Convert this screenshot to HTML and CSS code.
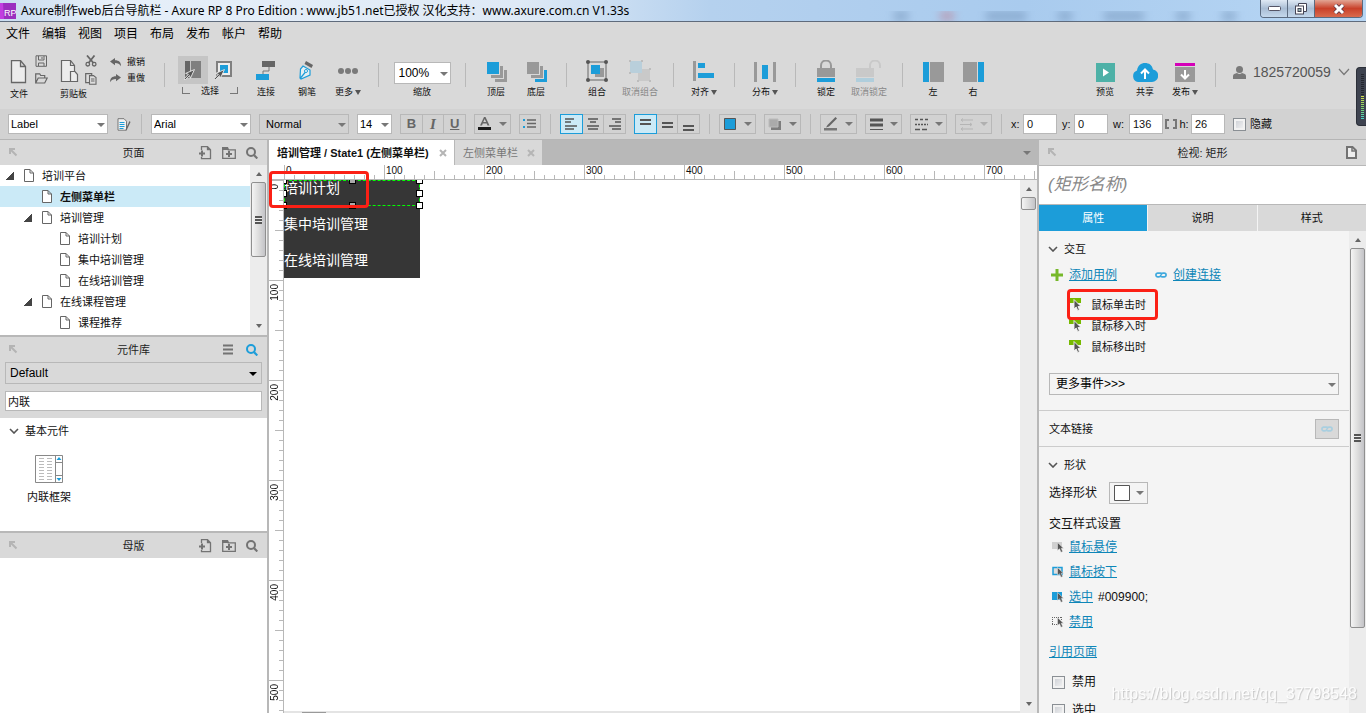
FILE: index.html
```html
<!DOCTYPE html>
<html lang="zh-CN">
<head>
<meta charset="utf-8">
<title>Axure RP 8</title>
<link rel="stylesheet" href="styles.css">
</head>
<body>
<svg class="sprite" aria-hidden="true">
  <symbol id="i-page" viewBox="0 0 10 13"><path d="M.5.5h5.5l3.500 3.500v8.500h-9zM6 .5v3.500h3.500" fill="#fff" stroke="#666"/></symbol>
  <symbol id="i-pin" viewBox="0 0 9 9"><path d="M1 6V1h5M1.500 1.500l6 6" fill="none" stroke="#b4b4b4" stroke-width="2"/></symbol>
  <symbol id="i-addpage" viewBox="0 0 14 14"><path d="M3.500 4V.7h6l3 3v9h-9V11M9.500.7v3h3" fill="none" stroke="#737373" stroke-width="1.300"/><path d="M1 7.500h6M4 4.500v6" stroke="#737373" stroke-width="2"/></symbol>
  <symbol id="i-addfolder" viewBox="0 0 14 12"><path d="M.7 11.300V.8h4.500l1 2h7.100v8.500z" fill="none" stroke="#737373" stroke-width="1.300"/><path d="M0 0h6l1 3H0zM6 4h2v2h2v2H8v2H6V8H4V6h2z" fill="#737373"/></symbol>
  <symbol id="i-search" viewBox="0 0 12 12"><path d="M8.200 8.200L11.300 11.500" stroke="currentColor" stroke-width="2.200"/><circle cx="5" cy="5" r="4" fill="none" stroke="currentColor" stroke-width="2"/></symbol>
  <symbol id="i-chev" viewBox="0 0 10 6"><path d="M1 1l4 4 4-4" fill="none" stroke="#555" stroke-width="1.600"/></symbol>
  <symbol id="i-link" viewBox="0 0 13 6"><path d="M8 1.500C6.500.5 5.500 1 4 1H3a2 2 0 0 0 0 4h1.500C6.500 5 6.500 1 8.500 1H10a2 2 0 0 1 0 4H8C7 5 6.500 4.800 6 4.500" fill="none" stroke="currentColor" stroke-width="1.800"/></symbol>
  <symbol id="i-cursor" viewBox="0 0 7 11"><path d="M.5.5v8l2-1.700 1.500 3.500 1.700-.8-1.500-3.300h2.300z" fill="#555" stroke="#eee" stroke-width=".5"/></symbol>
  <symbol id="i-event" viewBox="0 0 13 13"><path d="M0 0h12v5H0z" fill="#76b900"/><path d="M5 1.500v9.500l2.200-2 1.500 3.500 1.800-.8L9 8.500h3z" fill="#555" stroke="#f4f4f4" stroke-width=".9"/></symbol>
  <symbol id="i-arrow" viewBox="0 0 10 10"><path d="M0 9l1 1 4-4 .8 2.500L9.500.5 1.500 4l2.500.8z" fill="#555" stroke="#eee" stroke-width=".8"/></symbol>
</svg>

<header class="titlebar">
  <svg class="logo" width="16" height="16"><path d="M0 0h16v16H0z" fill="#9b2fbf"/><path d="M0 0h3l1 16H0z" fill="#c23ee0"/><text x="4" y="13" class="logo-text">RP</text></svg>
  <h1 class="title">Axure制作web后台导航栏 - Axure RP 8 Pro Edition : www.jb51.net已授权 汉化支持：www.axure.com.cn V1.33s</h1>
  <div class="smudges"><i></i><i class="red"></i><i class="wide"></i><i></i><i class="wide"></i><i></i><i></i></div>
  <div class="winctl">
    <button aria-label="最小化"><svg width="13" height="6"><rect x=".5" y=".5" width="12" height="4" rx="1" fill="#fff" stroke="#556"/></svg></button>
    <button aria-label="还原"><svg width="12" height="12"><path d="M3.500 3V.5h8v8H9" fill="#fff" stroke="#445"/><rect x=".5" y="3" width="8" height="8" fill="#fff" stroke="#445"/><rect x="3" y="5.500" width="3" height="3" fill="#9bb" stroke="#445"/></svg></button>
    <button class="close" aria-label="关闭"><svg width="12" height="10"><path d="M2 1l8 8M10 1L2 9" stroke="#534" stroke-width="4.500"/><path d="M2 1l8 8M10 1L2 9" stroke="#fff" stroke-width="3"/></svg></button>
  </div>
</header>

<nav class="menubar">
  <button>文件</button><button>编辑</button><button>视图</button><button>项目</button><button>布局</button><button>发布</button><button>帐户</button><button>帮助</button>
</nav>

<div class="toolbar">
  <div class="filetools">
    <button class="tool file"><svg width="18" height="24"><path d="M1.500.5h9l5 6v16h-14zM10.500.5v6h5" fill="#ececec" stroke="#666" stroke-width="1.300"/></svg><span>文件</span></button>
    <div class="pair">
      <button aria-label="保存"><svg width="13" height="12"><path d="M1 .8h10.500v10.500H1z" fill="none" stroke="#666"/><path d="M3.500 1v4h5.500V1M3.500 11V8h5.500v3M7 2v2" fill="none" stroke="#666"/></svg></button>
      <button aria-label="打开"><svg width="13" height="11"><path d="M.7 10V.8h4l1 1.700h4v2.500M.7 10l2.500-5h9l-2.500 5z" fill="none" stroke="#666" stroke-width="1.200"/></svg></button>
    </div>
    <button class="tool clip"><svg width="19" height="24"><path d="M10.500 21.500h-9V.5h9l4 5v6M10.500.5v5h4" fill="#ececec" stroke="#666" stroke-width="1.200"/><path d="M10.500 11.500h4.500l2.500 3v7h-7z" fill="#ececec" stroke="#666" stroke-width="1.200"/></svg><span>剪贴板</span></button>
    <div class="pair">
      <button aria-label="剪切"><svg width="12" height="12"><path d="M2 .5l6.500 7.500M9.500.5L3.500 8" stroke="#666" stroke-width="1.800"/><circle cx="2.800" cy="9.200" r="1.800" fill="none" stroke="#666" stroke-width="1.300"/><circle cx="9.200" cy="9.200" r="1.800" fill="none" stroke="#666" stroke-width="1.300"/></svg></button>
      <button aria-label="复制"><svg width="12" height="12"><path d="M.7.6h6v9h-6z" fill="#ddd" stroke="#666" stroke-width="1.200"/><path d="M4.500 2.600h4l2.500 2v6.700H4.500zM6 6h3.500M6 8h3.500" fill="#ddd" stroke="#666" stroke-width="1.100"/></svg></button>
    </div>
    <div class="history">
      <button><svg width="12" height="9"><path d="M0 3.500L5 0v2.300c4 0 6 2 6 6C9.500 6 8 5 5 5v2.300z" fill="#666"/></svg>撤销</button>
      <button><svg width="12" height="9"><path d="M11 3.500L6 0v2.300c-4 0-6 2-6 6C1.500 6 3 5 6 5v2.300z" fill="#666"/></svg>重做</button>
    </div>
  </div>
  <i class="sep"></i>
  <div class="selectgroup">
    <div class="modes">
      <button class="on" aria-label="相交选择"><svg width="18" height="20"><path d="M1 1h5v17H1z" fill="#666"/><path d="M7 1h10v17H7z" fill="#7f7f7f"/><svg x="0" y="9" width="11" height="11" viewBox="0 0 10 10"><use href="#i-arrow"/></svg></svg></button>
      <button aria-label="包含选择"><svg width="19" height="20"><path d="M3 2h14v14H3z" fill="#eee" stroke="#808080" stroke-width="2"/><path d="M6 5h8v8H6z" fill="#1c9dd9"/><svg x="0" y="9" width="11" height="11" viewBox="0 0 10 10"><use href="#i-arrow"/></svg></svg></button>
    </div>
    <div class="bracket"><i></i><span>选择</span><i class="r"></i></div>
  </div>
  <div class="tools spaced">
    <button class="tool"><svg width="20" height="22"><path d="M6 1h13v6H6z" fill="#666"/><path d="M13 7v4H7v4" fill="none" stroke="#777"/><path d="M0 14h13v6H0z" fill="#1c9dd9"/></svg><span>连接</span></button>
    <button class="tool"><svg width="16" height="22"><path d="M7 1l7 4-1.500 3-7-4z" fill="#666"/><path d="M4 6l7 4v5l-9 4-1-1L1.500 9zM1.500 18l5-6" fill="#e5eef2" stroke="#1c9dd9" stroke-width="1.200"/><circle cx="7" cy="11" r="1.500" fill="#fff" stroke="#1c9dd9"/></svg><span>钢笔</span></button>
    <button class="tool"><svg width="22" height="22"><g fill="#7a7a7a"><circle cx="4" cy="11" r="3"/><circle cx="11" cy="11" r="3"/><circle cx="18" cy="11" r="3"/></g></svg><span>更多<b class="dn"></b></span></button>
  </div>
  <i class="sep"></i>
  <div class="zoom"><label for="zoom">缩放</label><div class="combo roomy"><select id="zoom"><option>100%</option></select></div></div>
  <i class="sep"></i>
  <div class="tools">
    <button class="tool"><svg width="21" height="22"><path d="M18 10h3v12H9v-3h9zM14 6h3v12H5v-3h9z" fill="#999"/><path d="M0 2h14v13H0z" fill="#d9d9d9"/><path d="M1 2h12v12H1z" fill="#1c9dd9"/></svg><span>顶层</span></button>
    <button class="tool"><svg width="21" height="22"><path d="M18 10h3v12H9v-3h9z" fill="#1c9dd9"/><path d="M14 6h3v12H5v-3h9z" fill="#999"/><path d="M0 2h14v13H0z" fill="#d9d9d9"/><path d="M1 2h12v12H1z" fill="#999"/></svg><span>底层</span></button>
  </div>
  <i class="sep"></i>
  <div class="tools">
    <button class="tool"><svg width="22" height="22"><path d="M2 2h18v18H2z" fill="none" stroke="#666"/><path d="M9 8h9v9H9z" fill="#999"/><path d="M5 5h9v9H5z" fill="#1c9dd9"/><g fill="#555"><circle cx="2" cy="2" r="2"/><circle cx="20" cy="2" r="2"/><circle cx="2" cy="20" r="2"/><circle cx="20" cy="20" r="2"/></g></svg><span>组合</span></button>
    <button class="tool big" disabled><svg width="22" height="22"><path d="M9 9h12v12H9z" fill="#c9c9c9"/><path d="M1 1h12v12H1z" fill="#b9cfdb"/><g fill="#bdbdbd"><path d="M0 0h2v2H0zM12 0h2v2h-2zM0 12h2v2H0zM20 8h2v2h-2zM8 20h2v2H8zM20 20h2v2h-2z"/></g></svg><span>取消组合</span></button>
  </div>
  <i class="sep"></i>
  <button class="tool"><svg width="22" height="22"><path d="M0 1h3v20H0z" fill="#999"/><path d="M5 3h7v5H5zM5 13h16v5H5z" fill="#1c9dd9"/></svg><span>对齐<b class="dn"></b></span></button>
  <i class="sep"></i>
  <button class="tool"><svg width="22" height="22"><path d="M0 2h3v20H0zM19 2h3v20h-3z" fill="#999"/><path d="M8 5h6v14H8z" fill="#1c9dd9"/></svg><span>分布<b class="dn"></b></span></button>
  <i class="sep"></i>
  <div class="tools">
    <button class="tool"><svg width="18" height="22"><path d="M4 9V5.500a5 5 0 0 1 10 0V9" fill="none" stroke="#999" stroke-width="2"/><path d="M0 8h18v9H0z" fill="#999"/><path d="M0 18h18v4H0z" fill="#1c9dd9"/></svg><span>锁定</span></button>
    <button class="tool big" disabled><svg width="26" height="22"><path d="M14 9V5.500a5 5 0 0 1 10 0V8" fill="none" stroke="#c9c9c9" stroke-width="2"/><path d="M0 8h18v9H0z" fill="#c9c9c9"/><path d="M0 18h18v4H0z" fill="#b0cedc"/></svg><span>取消锁定</span></button>
  </div>
  <i class="sep"></i>
  <div class="tools">
    <button class="tool"><svg width="21" height="22"><path d="M0 2h6v20H0z" fill="#1c9dd9"/><path d="M7 2h14v20H7z" fill="#999"/></svg><span>左</span></button>
    <button class="tool"><svg width="21" height="22"><path d="M15 2h6v20h-6z" fill="#1c9dd9"/><path d="M0 2h14v20H0z" fill="#999"/></svg><span>右</span></button>
  </div>
  <div class="tools last">
    <button class="tool"><svg width="19" height="22"><path d="M0 3h19v19H0z" fill="#4eb1a7"/><path d="M7 8.500l6 4-6 4z" fill="#fff"/></svg><span>预览</span></button>
    <button class="tool"><svg width="26" height="22"><path d="M6 22a6 6 0 0 1-1-11.500C6 5 9 3 13 3c4 0 7 2 8 6.500A6.300 6.300 0 0 1 20 22z" fill="#1c9dd9"/><path d="M13 19v-9M9 13.500l4-4 4 4" fill="none" stroke="#fff" stroke-width="2"/></svg><span>共享</span></button>
    <button class="tool"><svg width="20" height="22"><path d="M0 3h20v3H0z" fill="#d400b8"/><path d="M0 7h20v15H0z" fill="#999"/><path d="M10 10v8M6 14.500l4 4 4-4" fill="none" stroke="#fff" stroke-width="2"/></svg><span>发布<b class="dn"></b></span></button>
  </div>
  <i class="sep"></i>
  <button class="user"><svg width="13" height="13"><circle cx="6.500" cy="3.500" r="3.500" fill="#7a7a7a"/><path d="M0 13v-3c0-2 2-2.500 4-3 1.500 1.300 3.500 1.300 5 0 2 .5 4 1 4 3v3z" fill="#7a7a7a"/></svg><span>1825720059</span><svg width="12" height="8"><path d="M1 1l5 5.500L11 1" fill="none" stroke="#777" stroke-width="1.200"/></svg></button>
  <div class="meter"><i></i></div>
</div>

<div class="formatbar">
  <div class="combo w100"><select aria-label="样式"><option>Label</option></select></div>
  <button class="plain" aria-label="编辑样式"><svg width="14" height="13"><path d="M1 .7h6l2.500 2.500v9H1z" fill="#f2f2f2" stroke="#777"/><path d="M2.500 4.500h5M2.500 6.500h5M2.500 8.500h5M2.500 10.500h4" stroke="#1c9dd9"/><path d="M12.500 3L9 10.500l-.5 2 1.500-1L13.500 4z" fill="#666"/></svg></button>
  <i class="sep"></i>
  <div class="combo w100"><select aria-label="字体"><option>Arial</option></select></div>
  <div class="combo w90 grey"><select aria-label="字形"><option>Normal</option></select></div>
  <div class="combo w35"><select aria-label="字号"><option>14</option></select></div>
  <div class="seg"><button><b>B</b></button><button><em>I</em></button><button><u>U</u></button></div>
  <button class="drop" aria-label="文字颜色"><svg width="14" height="14"><path d="M2 8.500L6 0h1.500l4 8.500H9.500L8.700 6.500H4.800L4 8.500zM5.300 5h2.800L6.700 2z" fill="#666"/><path d="M0 10h13v3H0z" fill="#1a1a1a"/></svg></button>
  <button class="box" aria-label="项目符号"><svg width="14" height="12"><path d="M0 1h2v2H0zM0 8h2v2H0z" fill="#1c9dd9"/><path d="M4 2h9M4 5.500h9M4 9h9" stroke="#666" stroke-width="1.500"/></svg></button>
  <i class="sep"></i>
  <div class="seg">
    <button class="on" aria-label="左对齐"><svg width="12" height="12"><path d="M0 1h9M0 4h6M0 8h12M0 11h9" stroke="#555" stroke-width="1.500"/></svg></button>
    <button aria-label="居中"><svg width="12" height="12"><path d="M1 1h10M3 4h6M0 8h12M1 11h10" stroke="#555" stroke-width="1.500"/></svg></button>
    <button aria-label="右对齐"><svg width="12" height="12"><path d="M3 1h9M6 4h6M0 8h12M3 11h9" stroke="#555" stroke-width="1.500"/></svg></button>
  </div>
  <div class="seg">
    <button class="on" aria-label="顶部"><svg width="11" height="13"><path d="M0 2h11M0 6h11" stroke="#555" stroke-width="2"/></svg></button>
    <button aria-label="中部"><svg width="11" height="13"><path d="M0 5h11M0 9h11" stroke="#555" stroke-width="2"/></svg></button>
    <button aria-label="底部"><svg width="11" height="13"><path d="M0 8h11M0 12h11" stroke="#555" stroke-width="2"/></svg></button>
  </div>
  <i class="sep"></i>
  <button class="drop" aria-label="填充"><svg width="14" height="12"><path d="M1.500.5h11v11h-11z" fill="#1c9dd9" stroke="#555"/></svg></button>
  <button class="drop" aria-label="阴影"><svg width="14" height="13"><path d="M3 3h10v9H3z" fill="#7d7d7d"/><path d="M1 1h9v8H1z" fill="#aaa" stroke="#bbb"/></svg></button>
  <i class="sep"></i>
  <button class="drop" aria-label="线条颜色"><svg width="14" height="14"><path d="M11.500 0l1.500 1.500L5 9.500 2 10.500 3.500 8z" fill="#666"/><path d="M0 11h13v2.500H0z" fill="#777"/></svg></button>
  <button class="drop" aria-label="线宽"><svg width="13" height="13"><path d="M0 2h13" stroke="#555" stroke-width="3"/><path d="M0 7h13" stroke="#555" stroke-width="3"/><path d="M0 11.500h13" stroke="#555"/></svg></button>
  <button class="drop" aria-label="线型"><svg width="13" height="13"><path d="M0 1.500h13" stroke="#555" stroke-width="1.500" stroke-dasharray="3 2"/><path d="M0 6.500h13" stroke="#555" stroke-width="1.500" stroke-dasharray="2 1"/><path d="M0 11.500h13" stroke="#555" stroke-width="1.500" stroke-dasharray="5 2"/></svg></button>
  <button class="drop off" disabled aria-label="箭头"><svg width="13" height="13"><path d="M2 2h11M0 6.500h11M2 11h11M3 .5L1 2l2 1.500M10 5l2 1.500L10 8M3 9.500L1 11l2 1.500" fill="none" stroke="#b5b5b5"/></svg></button>
  <i class="sep"></i>
  <div class="coord x"><label for="cx">x:</label><input id="cx" value="0"></div>
  <div class="coord y"><label for="cy">y:</label><input id="cy" value="0"></div>
  <div class="coord w"><label for="cw">w:</label><input id="cw" value="136"></div>
  <div class="coord h"><svg width="12" height="10"><path d="M4 1H1v8h3M8 1h3v8H8" fill="none" stroke="#777" stroke-width="2"/></svg><label for="ch">h:</label><input id="ch" value="26"></div>
  <label class="check"><input type="checkbox">隐藏</label>
</div>

<main class="work">
  <aside class="left">
    <section class="pages">
      <header class="phead"><svg width="9" height="9"><use href="#i-pin"/></svg><h2>页面</h2><div class="acts"><button aria-label="添加页面"><svg width="14" height="14"><use href="#i-addpage"/></svg></button><button aria-label="添加文件夹"><svg width="14" height="12"><use href="#i-addfolder"/></svg></button><button aria-label="搜索"><svg width="12" height="12"><use href="#i-search"/></svg></button></div></header>
      <div class="scrollrow">
        <ul class="tree">
          <li><i class="tw"></i><svg width="10" height="13"><use href="#i-page"/></svg>培训平台</li>
          <li class="l2 sel"><i class="tw none"></i><svg width="10" height="13"><use href="#i-page"/></svg>左侧菜单栏</li>
          <li class="l2"><i class="tw"></i><svg width="10" height="13"><use href="#i-page"/></svg>培训管理</li>
          <li class="l3"><i class="tw none"></i><svg width="10" height="13"><use href="#i-page"/></svg>培训计划</li>
          <li class="l3"><i class="tw none"></i><svg width="10" height="13"><use href="#i-page"/></svg>集中培训管理</li>
          <li class="l3"><i class="tw none"></i><svg width="10" height="13"><use href="#i-page"/></svg>在线培训管理</li>
          <li class="l2"><i class="tw"></i><svg width="10" height="13"><use href="#i-page"/></svg>在线课程管理</li>
          <li class="l3"><i class="tw none"></i><svg width="10" height="13"><use href="#i-page"/></svg>课程推荐</li>
        </ul>
        <div class="sbar"><i class="up"></i><div class="thumb short"><i></i></div><i class="down"></i></div>
      </div>
    </section>
    <section class="library">
      <header class="phead"><svg width="9" height="9"><use href="#i-pin"/></svg><h2>元件库</h2><div class="acts"><button aria-label="菜单"><svg width="10" height="11"><path d="M0 1.500h10M0 5.500h10M0 9.500h10" stroke="#737373" stroke-width="2"/></svg></button><button class="blue" aria-label="搜索"><svg width="12" height="12"><use href="#i-search"/></svg></button></div></header>
      <div class="filters">
        <div class="combo grey black roomy"><select aria-label="元件库"><option>Default</option></select></div>
        <input aria-label="搜索元件" value="内联">
      </div>
      <div class="widgets">
        <h3><svg width="10" height="6"><use href="#i-chev"/></svg>基本元件</h3>
        <figure>
          <svg width="28" height="28"><path d="M.5.5h27v27H.5zM20.500.5v27M20.500 7.500h7M20.500 20.500h7" fill="#fff" stroke="#888"/><path d="M4 3.500h5M4 6.500h5M4 9.500h5M4 12.500h5M4 15.500h5M4 18.500h5M4 21.500h5M4 24.500h5M12 3.500h5M12 6.500h5M12 9.500h5M12 12.500h5M12 15.500h5M12 18.500h5M12 21.500h5M12 24.500h5" stroke="#bbb"/><path d="M21.500 5l2.500-3 2.500 3zM21.500 23l2.500 3 2.500-3z" fill="#1c9dd9"/></svg>
          <figcaption>内联框架</figcaption>
        </figure>
      </div>
    </section>
    <section class="masters">
      <header class="phead"><svg width="9" height="9"><use href="#i-pin"/></svg><h2>母版</h2><div class="acts"><button aria-label="添加母版"><svg width="14" height="14"><use href="#i-addpage"/></svg></button><button aria-label="添加文件夹"><svg width="14" height="12"><use href="#i-addfolder"/></svg></button><button aria-label="搜索"><svg width="12" height="12"><use href="#i-search"/></svg></button></div></header>
    </section>
  </aside>

  <section class="center">
    <div class="tabs">
      <div class="tab active"><button>培训管理 / State1 (左侧菜单栏)</button><button class="x" aria-label="关闭"><svg width="8" height="8"><path d="M1 1l6 6M7 1L1 7" stroke="#b5b5b5" stroke-width="2"/></svg></button></div>
      <div class="tab"><button>左侧菜单栏</button><button class="x" aria-label="关闭"><svg width="8" height="8"><path d="M1 1l6 6M7 1L1 7" stroke="#b5b5b5" stroke-width="2"/></svg></button></div>
      <button class="more" aria-label="标签列表"></button>
    </div>
    <div class="hruler"><div class="hticks"><span>0</span><span>100</span><span>200</span><span>300</span><span>400</span><span>500</span><span>600</span><span>700</span></div></div>
    <div class="stage">
      <div class="vruler"><div><span>0</span></div><div><span>100</span></div><div><span>200</span></div><div><span>300</span></div><div><span>400</span></div><div><span>500</span></div></div>
      <div class="canvas">
        <div class="navbox">
          <div class="item picked">培训计划<i class="n"></i><i class="ne"></i><i class="e"></i><i class="se"></i><i class="s"></i><i class="sw"></i><i class="w"></i><i class="nw"></i></div>
          <div class="item">集中培训管理</div>
          <div class="item">在线培训管理</div>
        </div>
        <div class="mark mark-item"></div>
        <div class="hscroll"><i></i></div>
      </div>
      <div class="sbar"><i class="up"></i><div class="thumb tiny"></div><i class="down"></i></div>
    </div>
  </section>

  <aside class="right">
    <header class="phead"><svg width="9" height="9"><use href="#i-pin"/></svg><h2>检视: 矩形</h2><div class="acts"><button aria-label="页面"><svg width="11" height="13"><path d="M1 1h5.500L10 4.500V12H1z" fill="#eee" stroke="#737373" stroke-width="2"/><path d="M6 1v4h4" fill="none" stroke="#737373" stroke-width="1.500"/></svg></button></div></header>
    <input class="name" aria-label="名称" placeholder="(矩形名称)">
    <div class="ptabs"><button class="on">属性</button><button>说明</button><button>样式</button></div>
    <div class="scrollrow grow">
      <div class="props">
        <h3><svg width="10" height="6"><use href="#i-chev"/></svg>交互</h3>
        <div class="links"><a href="#"><svg width="12" height="12"><path d="M4.500 0h3v4.500H12v3H7.500V12h-3V7.500H0v-3h4.500z" fill="#76b82a"/></svg><span>添加用例</span></a><a href="#"><svg width="12" height="6"><use href="#i-link"/></svg><span>创建连接</span></a></div>
        <ul class="events"><li><svg width="13" height="13"><use href="#i-event"/></svg>鼠标单击时<div class="mark mark-event"></div></li><li><svg width="13" height="13"><use href="#i-event"/></svg>鼠标移入时</li><li><svg width="13" height="13"><use href="#i-event"/></svg>鼠标移出时</li></ul>
        <div class="combo grey events-more"><select aria-label="更多事件"><option>更多事件&gt;&gt;&gt;</option></select></div>
        <div class="textlink">文本链接<button aria-label="文本链接" disabled><svg width="12" height="6"><use href="#i-link"/></svg></button></div>
        <h3 class="shape"><svg width="10" height="6"><use href="#i-chev"/></svg>形状</h3>
        <div class="pick"><span>选择形状</span><button class="drop" aria-label="选择形状"><svg width="16" height="16"><path d="M.5.5h15v15H.5z" fill="#fff" stroke="#555"/></svg></button></div>
        <h4>交互样式设置</h4>
        <ul class="styles">
          <li><svg width="12" height="12"><path d="M0 1h10v7H0z" fill="#d0d0d0"/><svg x="5" y="1" width="7" height="11"><use href="#i-cursor"/></svg></svg><a href="#">鼠标悬停</a></li>
          <li><svg width="12" height="12"><path d="M1 1.500h9v7H1z" fill="#ddd" stroke="#1c9dd9" stroke-width="1.500"/><svg x="5" y="1" width="7" height="11"><use href="#i-cursor"/></svg></svg><a href="#">鼠标按下</a></li>
          <li><svg width="12" height="12"><path d="M0 1h10v8H0z" fill="#1c9dd9"/><svg x="5" y="1" width="7" height="11"><use href="#i-cursor"/></svg></svg><a href="#">选中</a><span>#009900;</span></li>
          <li><svg width="12" height="12"><path d="M0 1.500h10M0 8.500h6M.5 1v8M9.500 1v3" fill="none" stroke="#666" stroke-dasharray="1 1"/><svg x="5" y="1" width="7" height="11"><use href="#i-cursor"/></svg></svg><a href="#">禁用</a></li>
        </ul>
        <p class="ref"><a href="#">引用页面</a></p>
        <label class="check"><input type="checkbox">禁用</label>
        <label class="check"><input type="checkbox">选中</label>
      </div>
      <div class="sbar"><i class="up"></i><div class="thumb long"><i></i></div></div>
    </div>
    <div class="watermark">https://blog.csdn.net/qq_37798548</div>
  </aside>
</main>
</body>
</html>
```
FILE: styles.css
```css
* { box-sizing: border-box; }
body, h1, h2, h3, h4, p, ul, figure { margin: 0; padding: 0; font-weight: normal; }
html, body { height: 100%; }
body {
  display: flex; flex-direction: column; overflow: hidden;
  background: #d9d9d9; color: #111;
  font: 12px/16px "Liberation Sans", "Noto Sans CJK SC", sans-serif;
}
ul { list-style: none; }
svg { display: block; flex: none; }
button, input, select { font: inherit; color: inherit; border-radius: 0; margin: 0; }
button { padding: 0; border: 0; background: none; display: flex; align-items: center; justify-content: center; white-space: nowrap; }
input { min-width: 0; border: 1px solid #b8b8b8; background: #fff; padding: 0 2px; }
a { color: #0e86b8; }
.sprite { position: absolute; width: 0; height: 0; }
.sep { flex: none; width: 1px; background: #b9b9b9; }

/* title bar */
.titlebar {
  position: relative; flex: none; height: 22px; display: flex; align-items: center;
  border-bottom: 1px solid #5f6b7c;
  background: linear-gradient(90deg, #c9dcf0 0, #e6eff9 8%, #dfeaf6 38%, #b5d1ee 52%, #a9cbee 75%, #b7d6f4 100%);
}
.logo { margin-top: 1px; }
.logo-text { font: 9px "Liberation Sans", sans-serif; fill: #fff; }
.title { margin-left: 5px; font: 12px/20px "Noto Sans", "Noto Sans CJK SC", sans-serif; white-space: nowrap; color: #000; }
.smudges { display: flex; flex: 1; gap: 32px; align-self: flex-end; justify-content: flex-end; padding-right: 24px; overflow: hidden; }
.smudges i { width: 14px; height: 10px; background: #6f8fb5; opacity: .5; filter: blur(4px); }
.smudges .red { background: #c0788a; }
.smudges .wide { width: 40px; }
.winctl { display: flex; align-self: flex-start; height: 18px; margin-right: 3px; border: 1px solid #5b6b80; border-top: 0; border-radius: 0 0 4px 4px; overflow: hidden; }
.winctl button { width: 27px; border-right: 1px solid #5b6b80; background: linear-gradient(#dfe9f4, #a9bdd4 50%, #c4d8ec); }
.winctl button.close { width: 47px; border: 0; background: linear-gradient(#e2a594, #c9412a 50%, #d96b4e); }

/* menus */
.menubar { flex: none; display: flex; gap: 12px; height: 24px; padding-left: 6px; color: #000; }

/* main toolbar */
.toolbar { position: relative; flex: none; display: flex; height: 63px; padding-top: 14px; font-size: 9px; line-height: 12px; white-space: nowrap; }
.toolbar .sep { height: 24px; margin: 3px 10px 0; }
.tool { flex: none; width: 40px; height: 38px; flex-direction: column; justify-content: space-between; }
.tool.big { width: 46px; }
.tool:disabled { color: #888; }
.tool span { display: flex; align-items: center; }
.dn { margin-left: 2px; border: 3px solid transparent; border-top: 5px solid #555; border-bottom: 0; }
.tools { display: flex; }
.tools.spaced { gap: 1px; }
.tools.last { margin-left: auto; }
.filetools { display: flex; width: 154px; flex: none; padding-left: 10px; }
.filetools .tool { align-items: flex-start; width: 24px; height: 40px; }
.filetools .tool.clip { width: 24px; margin-left: 3px; }
.pair { display: flex; flex-direction: column; gap: 6px; align-items: center; width: 14px; height: 30px; margin: -5px 9px 0 0; }
.history { display: flex; flex-direction: column; gap: 4px; margin: -4px 0 0 3px; }
.history button { gap: 5px; }
.selectgroup { width: 71px; padding-left: 3px; }
.modes { display: flex; margin-top: -4px; }
.modes button { width: 30px; height: 28px; }
.modes .on { background: #c5c5c5; }
.bracket { display: flex; justify-content: space-between; width: 56px; margin: 1px 0 0 4px; }
.bracket i { width: 8px; height: 7px; margin-top: 2px; border: solid #777; border-width: 0 0 1px 1px; }
.bracket i.r { border-width: 0 1px 1px 0; }
.zoom { display: flex; flex-direction: column-reverse; justify-content: flex-start; align-items: center; gap: 2px; width: 66px; height: 38px; }
.zoom .combo { width: 57px; height: 22px; font-size: 12px; }
.user { width: 140px; height: 24px; justify-content: flex-start; gap: 7px; padding-left: 7px; font-size: 14px; color: #555; }
.meter { position: absolute; right: 0; top: 21px; width: 10px; height: 59px; padding: 6px 2px 6px 4px; background: #3e4350; border: 1px solid #2b2f38; border-right: 0; border-radius: 4px 0 0 4px; z-index: 2; }
.meter i { display: block; height: 100%; background: repeating-linear-gradient(transparent 0 1px, #3e4350 1px 2px), linear-gradient(#23262e 48%, #d6e04a 48%, #7fd36a 75%, #45d6c8); }

/* combo boxes */
.combo { position: relative; flex: none; height: 20px; border: 1px solid #b8b8b8; background: #fff; display: flex; }
.combo select { appearance: none; width: 100%; border: 0; padding: 0 2px; background: none; outline: 0; color: #000; }
.combo.roomy select { padding: 0 4px; }
.combo::after, .drop::after, .more::after { content: ""; border: 4px solid transparent; border-top: 4px solid #777; border-bottom: 0; pointer-events: none; }
.combo::after { position: absolute; right: 2px; top: calc(50% - 1px); }
.combo.grey { background: transparent; }
.combo.black::after { border-top-color: #000; right: 4px; }
.w100 { width: 100px; }
.w90 { width: 90px; }
.w90 select { padding-left: 6px; }
.w35 { width: 35px; }

/* formatting bar */
.formatbar { flex: none; display: flex; align-items: center; gap: 8px; height: 31px; padding-left: 8px; background: #d2d2d2; border-bottom: 1px solid #b5b5b5; font-size: 11px; white-space: nowrap; }
.formatbar .sep { height: 20px; margin: 0 1px; }
.plain { width: 16px; }
.seg { display: flex; border: 1px solid #b8b8b8; height: 20px; width: 66px; font-size: 13px; font-weight: bold; color: #666; }
.seg button { flex: 1; border-right: 1px solid #b8b8b8; }
.seg button:last-child { border: 0; }
.seg em { font-family: "Liberation Serif", serif; font-size: 15px; }
.seg .on { margin: -1px 0; border: 1px solid #1c9dd9; background: #cbeaf7; }
.seg .on:first-child { margin-left: -1px; }
.box { width: 22px; height: 20px; border: 1px solid #b8b8b8; }
.drop { width: 37px; height: 20px; gap: 7px; border: 1px solid #b8b8b8; }
.drop.off::after { border-top-color: #b0b0b0; }
.coord { display: flex; align-items: center; justify-content: space-between; }
.coord input { width: 34px; height: 20px; padding: 0 3px; }
.coord.x { width: 46px; }
.coord.y { width: 46px; margin-left: -3px; }
.coord.w { width: 50px; margin-left: -3px; }
.coord.h { width: 60px; margin-left: -6px; }
.check { display: flex; align-items: center; gap: 4px; }
.check input { appearance: none; width: 13px; height: 13px; border: 1px solid #8a8f94; background: linear-gradient(135deg, #c9ccd2, #f6f6f6); box-shadow: inset 0 0 0 2px #f2f2f2; }

/* panes */
.work { flex: 1; min-height: 0; display: grid; grid-template-columns: 269px minmax(0, 1fr) 329px; }
.left { display: flex; flex-direction: column; min-height: 0; border-right: 2px solid #b8b8b8; font-size: 11px; }
.phead { position: relative; flex: none; display: flex; align-items: center; justify-content: space-between; height: 25px; padding: 0 9px; font-size: 11px; color: #222; }
.phead h2 { position: absolute; left: 0; right: 0; text-align: center; font-size: 11px; pointer-events: none; }
.acts { display: flex; gap: 10px; color: #737373; }
.acts .blue { color: #1c9dd9; margin-left: 3px; }
.left section + section { border-top: 2px solid #b8b8b8; }
.scrollrow { display: flex; height: 170px; background: #fff; }
.tree { flex: 1; }
.tree li { display: flex; align-items: center; height: 21px; padding-left: 6px; white-space: nowrap; }
.tree li.l2 { padding-left: 24px; }
.tree li.l3 { padding-left: 42px; }
.tree li.sel { background: #cbeaf7; font-weight: bold; }
.tree svg { margin: 0 8px 0 10px; }
.tw { width: 8px; height: 8px; background: linear-gradient(135deg, transparent 50%, #444 50%); }
.tw.none { background: none; }
.sbar { flex: none; display: flex; flex-direction: column; align-items: center; width: 17px; background: #ececec; }
.sbar .up, .sbar .down { border: 3px solid transparent; }
.sbar .up { border-top: 0; border-bottom: 4px solid #666; margin: 7px 0 6px; }
.sbar .down { border-bottom: 0; border-top: 4px solid #666; margin: auto 0 7px; }
.thumb { display: flex; align-items: center; justify-content: center; width: 15px; border: 1px solid #8f8f8f; border-radius: 2px; background: linear-gradient(90deg, #f4f4f4, #ddd 50%, #c3c3c7); }
.thumb i { width: 7px; height: 8px; background: repeating-linear-gradient(#555 0 2px, #eee 2px 3px); }
.short { height: 75px; }
.tiny { height: 13px; }
.long { height: 380px; }
.filters { display: flex; flex-direction: column; gap: 7px; padding: 0 5px 7px; }
.filters .combo { height: 22px; font-size: 12px; }
.filters input { height: 20px; }
.widgets { height: 113px; background: #fff; }
.left h3 { display: flex; align-items: center; gap: 6px; height: 26px; padding-left: 9px; font-size: 11px; }
.widgets figure { display: flex; flex-direction: column; align-items: center; gap: 6px; width: 98px; margin-top: 11px; }
.masters { flex: 1; background: #fff; }
.masters .phead { background: #d9d9d9; }

/* editor */
.center { display: flex; flex-direction: column; min-height: 0; background: #fff; }
.tabs { flex: none; display: flex; height: 25px; background: #b8b8b8; font-size: 11px; white-space: nowrap; }
.tab { display: flex; align-items: center; justify-content: space-between; width: 87px; padding: 0 7px 0 8px; background: #d9d9d9; color: #777; }
.tab.active { width: 186px; background: #fff; color: #111; font-weight: bold; border-right: 1px solid #b8b8b8; }
.more { margin-left: auto; width: 20px; }
.hruler { flex: none; height: 15px; padding-left: 15px; border-bottom: 1px solid #b8b8b8; overflow: hidden; }
.hticks {
  display: flex; height: 14px; font-size: 10px; line-height: 11px;
  background:
    repeating-linear-gradient(90deg, #b8b8b8 0 1px, transparent 1px 100px) 0 0 / 100% 14px no-repeat,
    repeating-linear-gradient(90deg, #b8b8b8 0 1px, transparent 1px 50px) 0 100% / 100% 8px no-repeat,
    repeating-linear-gradient(90deg, #b8b8b8 0 1px, transparent 1px 10px) 0 100% / 100% 4px no-repeat;
}
.hticks span { flex: none; width: 100px; padding-left: 2px; }
.stage { flex: 1; min-height: 0; display: flex; }
.vruler {
  flex: none; width: 15px; overflow: hidden; border-right: 1px solid #b8b8b8; font-size: 10px; line-height: 11px;
  background:
    repeating-linear-gradient(#b8b8b8 0 1px, transparent 1px 100px) 0 0 / 14px 100% no-repeat,
    repeating-linear-gradient(#b8b8b8 0 1px, transparent 1px 50px) 100% 0 / 8px 100% no-repeat,
    repeating-linear-gradient(#b8b8b8 0 1px, transparent 1px 10px) 100% 0 / 4px 100% no-repeat;
}
.vruler div { height: 100px; padding-top: 4px; }
.vruler span { display: block; writing-mode: vertical-rl; transform: rotate(180deg); width: 11px; }
.canvas { position: relative; flex: 1; overflow: visible; }
.navbox { width: 136px; height: 98px; background: #363636; color: #fff; font-size: 14px; line-height: 16px; }
.item { position: relative; height: 26px; margin-bottom: 10px; }
.picked { outline: 1px dashed #0f0; outline-offset: -1px; }
.item i { position: absolute; width: 7px; height: 7px; background: #fff; border: 1px solid #000; }
.item i.n, .item i.s { left: 65px; background: #aaa; }
.item i.w, .item i.nw, .item i.sw { left: 0; width: 3px; border-left: 0; }
.item i.e, .item i.ne, .item i.se { right: -3px; }
.item i.n, .item i.ne, .item i.nw { top: 0; height: 4px; border-top: 0; }
.item i.e, .item i.w { top: 10px; }
.item i.s, .item i.se, .item i.sw { bottom: -3px; }
.mark { position: absolute; border: 3px solid #fb2015; border-radius: 4px; pointer-events: none; z-index: 3; }
.mark-item { left: -15px; top: -9px; width: 100px; height: 37px; }
.hscroll { position: absolute; left: 0; right: 0; bottom: 0; height: 2px; background: #e4e4e4; }
.hscroll i { position: absolute; left: 18px; width: 24px; height: 2px; top: 1px; background: #999; }

/* inspector */
.right { position: relative; display: flex; flex-direction: column; min-height: 0; border-left: 2px solid #b8b8b8; background: #f4f4f4; }
.right .phead { background: #d9d9d9; }
.name { flex: none; height: 40px; border-width: 1px 0; padding: 0 9px; font-size: 17px; font-style: italic; }
.name::placeholder { color: #888; opacity: 1; }
.ptabs { flex: none; display: flex; gap: 1px; height: 26px; }
.ptabs button { flex: 1; background: #d9d9d9; font-size: 11px; }
.ptabs .on { background: #1c9dd9; color: #fff; }
.scrollrow.grow { flex: 1; min-height: 0; height: auto; background: #f4f4f4; }
.props { flex: 1; overflow: hidden; }
.props h3 { display: flex; align-items: center; gap: 6px; height: 36px; padding-left: 9px; font-size: 11px; }
.props h3.shape { height: 35px; }
.links { display: flex; gap: 38px; padding-left: 12px; }
.links a { display: flex; align-items: center; gap: 6px; text-decoration: none; }
.links span { text-decoration: underline; }
.links a + a svg { color: #3fa9dd; }
.events { margin-top: 11px; padding-left: 30px; font-size: 11px; }
.events li { position: relative; display: flex; align-items: center; gap: 9px; height: 21px; }
.mark-event { left: -2px; top: -5px; width: 91px; height: 31px; }
.events-more { height: 22px; margin: 16px 10px 15px; }
.events-more select { padding-left: 6px; }
.textlink { display: flex; align-items: center; justify-content: space-between; height: 37px; padding: 0 10px; border: solid #ccc; border-width: 1px 0; font-size: 11px; }
.textlink button { width: 24px; height: 20px; border: 1px solid #b8b8b8; background: #d9d9d9; color: #a9cfe0; }
.pick { display: flex; align-items: center; gap: 12px; height: 22px; padding-left: 10px; }
.pick .drop { width: 39px; height: 22px; gap: 6px; }
.props h4 { margin-top: 10px; padding-left: 10px; font-size: 12px; line-height: 20px; }
.styles li { display: flex; align-items: center; height: 25px; padding-left: 13px; gap: 5px; }
.ref { padding-left: 10px; line-height: 36px; height: 34px; }
.props .check { height: 28px; padding-left: 13px; gap: 7px; }
.watermark { position: absolute; right: 9px; bottom: 8px; font: 16px/22px "Liberation Sans", sans-serif; color: #fff; text-shadow: 1px 1px 1px #bbb; opacity: .8; white-space: nowrap; pointer-events: none; }
```
